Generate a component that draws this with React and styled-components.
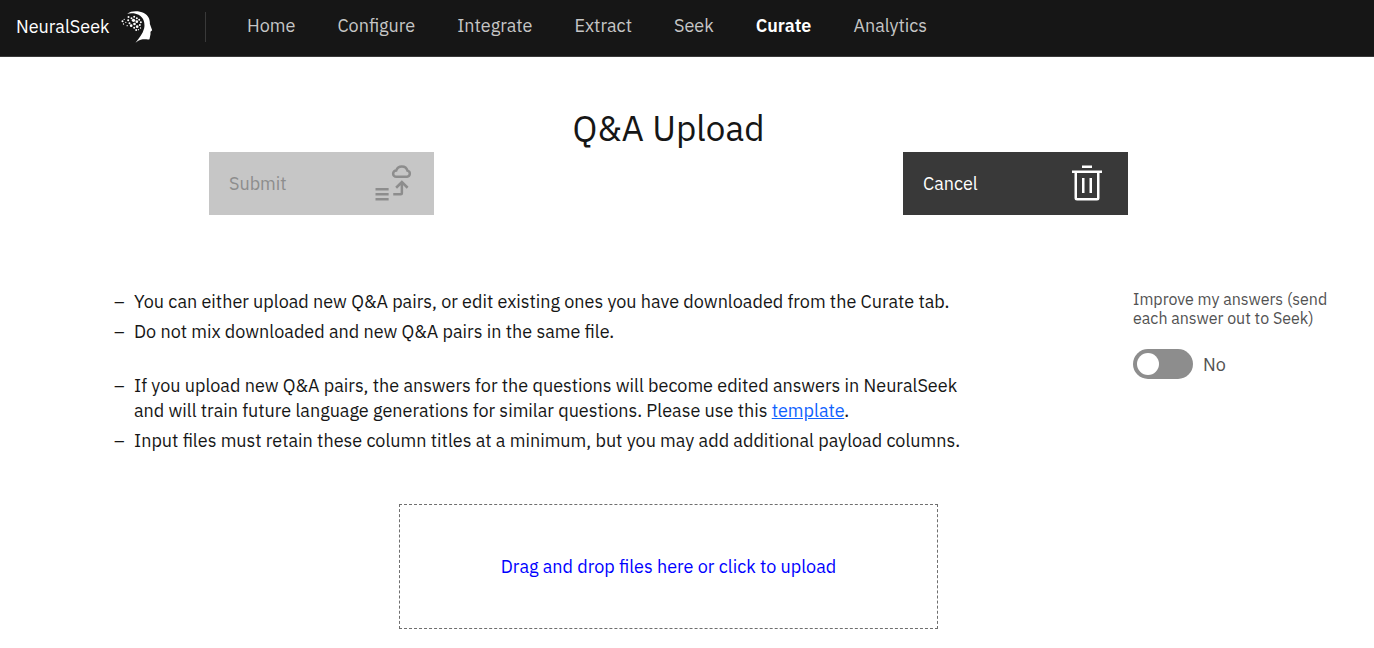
import React, { useState } from "react";
import styled, { createGlobalStyle } from "styled-components";

const GlobalStyle = createGlobalStyle`
  *, *::before, *::after { box-sizing: border-box; }
  body {
    margin: 0;
    background: #ffffff;
    color: #161616;
    font-family: "IBM Plex Sans", Roboto, "Liberation Sans", sans-serif;
    font-size: 18px;
    line-height: 25px;
  }
`;

const Header = styled.header`
  display: flex;
  align-items: center;
  height: 57px;
  padding-bottom: 3px;
  background: #161616;
  border-bottom: 1px solid #393939;
`;

const Brand = styled.a`
  display: flex;
  align-items: center;
  justify-content: space-between;
  width: 137px;
  margin: 0 52px 0 16px;
  color: #ffffff;
  text-decoration: none;
`;

const Nav = styled.nav`
  display: flex;
  align-items: center;
  gap: 42px;
  height: 30px;
  padding: 0 0 2px 41px;
  border-left: 1px solid #393939;
`;

const NavLink = styled.a`
  color: ${(p) => (p.$active ? "#ffffff" : "#c6c6c6")};
  font-weight: ${(p) => (p.$active ? 600 : 400)};
  text-decoration: none;
`;

const Main = styled.main`
  display: flex;
  flex-direction: column;
  align-items: center;
  padding: 48px 37px 19px 0;
`;

const Title = styled.h1`
  margin: 0;
  font-size: 35px;
  font-weight: 400;
  line-height: 47px;
`;

const Actions = styled.div`
  display: flex;
  justify-content: space-between;
  width: 100%;
  max-width: 919px;
`;

const ActionButton = styled.button`
  display: flex;
  align-items: center;
  justify-content: space-between;
  width: 225px;
  height: 63px;
  padding: 0 21px 1px 20px;
  border: 0;
  border-radius: 0;
  background: #393939;
  color: #ffffff;
  font: inherit;
  cursor: pointer;

  &:disabled {
    background: #c6c6c6;
    color: #8d8d8d;
    cursor: not-allowed;
  }
`;

const Details = styled.section`
  display: grid;
  grid-template-columns: 1fr 204px;
  column-gap: 96px;
  width: 100%;
  padding: 74px 0 0 114px;
`;

const Notes = styled.div`
  display: flex;
  flex-direction: column;
  gap: 29px;
  max-width: 856px;
`;

const List = styled.ul`
  display: flex;
  flex-direction: column;
  gap: 5px;
  margin: 0;
  padding: 0;
  list-style: none;
`;

const Item = styled.li`
  display: flex;

  &::before {
    content: "–";
    flex: 0 0 20px;
  }
`;

const TextLink = styled.a`
  color: #0f62fe;
`;

const Option = styled.label`
  display: flex;
  flex-direction: column;
  gap: 21px;
  padding-top: 1px;
  color: #525252;
  font-size: 16px;
  line-height: 19px;
`;

const SwitchRow = styled.span`
  display: flex;
  align-items: center;
  gap: 10px;
  font-size: 18px;
  line-height: 25px;
`;

const Switch = styled.input`
  appearance: none;
  display: flex;
  align-items: center;
  width: 60px;
  height: 30px;
  margin: 0;
  padding: 0 4px;
  border-radius: 15px;
  background: #8d8d8d;
  cursor: pointer;

  &::before {
    content: "";
    width: 22px;
    height: 22px;
    border-radius: 50%;
    background: #ffffff;
  }

  &:checked {
    justify-content: flex-end;
    background: #198038;
  }
`;

const DropZone = styled.button`
  width: 100%;
  max-width: 539px;
  height: 125px;
  margin-top: 51px;
  border: 1px dashed #6f6f6f;
  background: transparent;
  color: #0000ff;
  font: inherit;
  cursor: pointer;
`;

const dots = [
  [38, 47, 3], [43, 41, 2], [41, 55, 2], [48, 50, 2], [56, 34, 3], [55, 44, 3],
  [52, 60, 2], [59, 53, 3], [65, 38, 3], [73, 33, 3], [71, 44, 5], [64, 60, 4],
  [81, 38, 3], [81, 48, 4], [88, 42, 3], [93, 50, 3], [90, 58, 3], [74, 55, 4],
  [82, 63, 4], [73, 66, 3], [92, 67, 2], [79, 73, 3], [86, 72, 2],
];

function HeadLogo() {
  return (
    <svg width="32" height="32" viewBox="34 16 95 96" fill="#ffffff" aria-hidden="true">
      <path d="M52 24C64 15 86 14 102 22C117 30 121 44 120 54L127 74L122 78L122 86L119 101C110 104 100 95 77 111C88 98 99 84 103 68C107 46 98 28 72 23C64 22 58 23 52 24Z" />
      {dots.map(([x, y, r]) => (
        <circle key={`${x}-${y}`} cx={x} cy={y} r={r} />
      ))}
    </svg>
  );
}

function UploadIcon() {
  return (
    <svg width="40" height="40" viewBox="0 0 32 32" fill="none" stroke="currentColor" strokeWidth="2" aria-hidden="true">
      <path d="M2 21H12.5M2 25H12.5M2 29H12.5" />
      <path d="M16.2 25H22.1Q23.1 25 23.1 24V15.5M18.5 19.8L23.1 15.2L27.7 19.8" />
      <path d="M18.6 11H27.2A2.5 2.5 0 0 0 27.6 6.1A4.7 4.7 0 0 0 18.6 6A2.5 2.5 0 0 0 18.6 11Z" />
    </svg>
  );
}

function TrashIcon() {
  return (
    <svg width="40" height="40" viewBox="0 0 32 32" fill="currentColor" aria-hidden="true">
      <path d="M12 12H14V24H12ZM18 12H20V24H18ZM12 2H20V4H12Z" />
      <path d="M4 6V8H6V28A2 2 0 0 0 8 30H24A2 2 0 0 0 26 28V8H28V6ZM8 28V8H24V28Z" />
    </svg>
  );
}

const links = ["Home", "Configure", "Integrate", "Extract", "Seek", "Curate", "Analytics"];

export default function App() {
  const [improve, setImprove] = useState(false);
  return (
    <>
      <GlobalStyle />
      <Header>
        <Brand href="#">
          NeuralSeek
          <HeadLogo />
        </Brand>
        <Nav>
          {links.map((name) => (
            <NavLink key={name} href="#" $active={name === "Curate"}>
              {name}
            </NavLink>
          ))}
        </Nav>
      </Header>
      <Main>
        <Title>Q&amp;A Upload</Title>
        <Actions>
          <ActionButton type="button" disabled>
            Submit
            <UploadIcon />
          </ActionButton>
          <ActionButton type="button">
            Cancel
            <TrashIcon />
          </ActionButton>
        </Actions>
        <Details>
          <Notes>
            <List>
              <Item>
                <span>You can either upload new Q&amp;A pairs, or edit existing ones you have downloaded from the Curate tab.</span>
              </Item>
              <Item>
                <span>Do not mix downloaded and new Q&amp;A pairs in the same file.</span>
              </Item>
            </List>
            <List>
              <Item>
                <span>
                  If you upload new Q&amp;A pairs, the answers for the questions will become edited answers in NeuralSeek
                  and will train future language generations for similar questions. Please use this{" "}
                  <TextLink href="#">template</TextLink>.
                </span>
              </Item>
              <Item>
                <span>Input files must retain these column titles at a minimum, but you may add additional payload columns.</span>
              </Item>
            </List>
          </Notes>
          <Option>
            Improve my answers (send each answer out to Seek)
            <SwitchRow>
              <Switch type="checkbox" role="switch" checked={improve} onChange={(e) => setImprove(e.target.checked)} />
              {improve ? "Yes" : "No"}
            </SwitchRow>
          </Option>
        </Details>
        <DropZone type="button">Drag and drop files here or click to upload</DropZone>
      </Main>
    </>
  );
}
